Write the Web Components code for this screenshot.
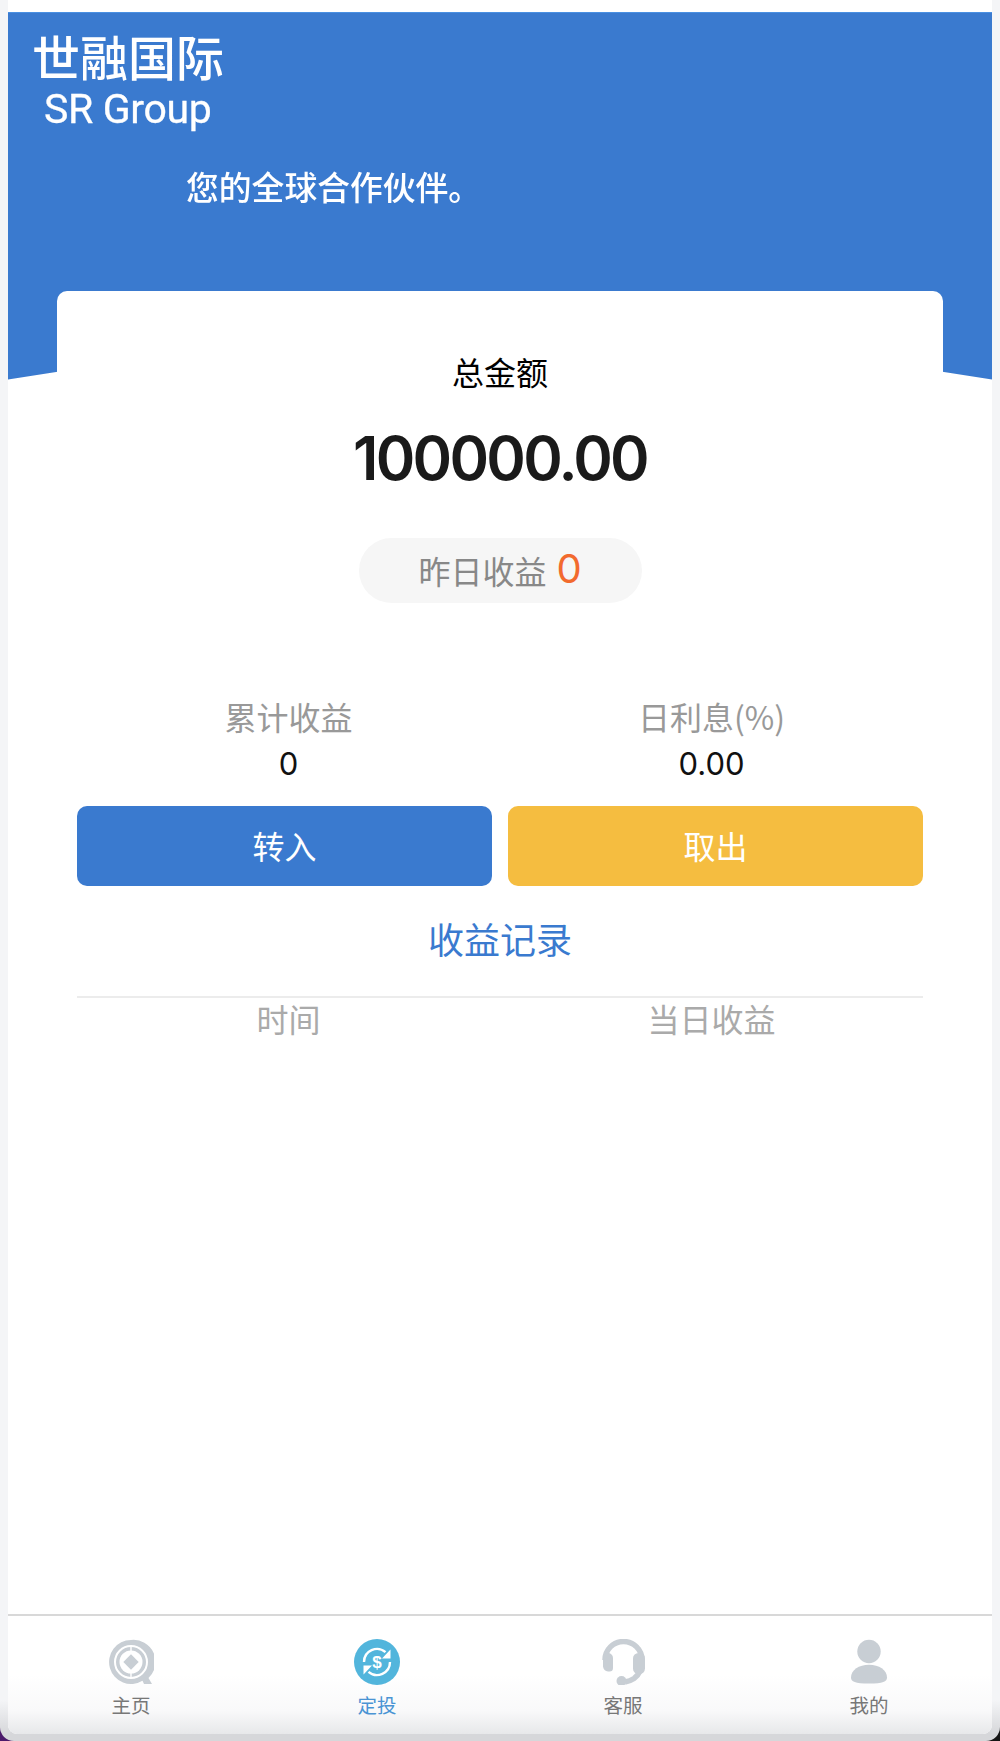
<!DOCTYPE html>
<html lang="zh"><head><meta charset="utf-8"><style>
html,body{margin:0;padding:0;height:1741px;overflow:hidden}
body{font-family:"Noto Sans CJK SC","Inter",sans-serif}
</style></head><body>
<app-window>
  <brand-hero></brand-hero>
  <balance-card></balance-card>
  <tab-bar slot="tabs">
    <tab-item label="主页"><svg viewBox="0 0 46 46" width="46" height="46"><path d="M23 1a22 22 0 1 0 11.500 40.800L36 45h8l-3.500-6A22 22 0 0 0 23 1z" fill="#c8ced4"/><circle cx="23" cy="23" r="16" fill="none" stroke="#fff" stroke-width="2"/><circle cx="23" cy="23" r="11.500" fill="#fff"/><path d="M23 7v5M23 34v5" stroke="#fff" stroke-width="1.400"/><path d="M23 15.300l7.700 7.700-7.700 7.700-7.700-7.700z" fill="#c8ced4"/></svg></tab-item>
    <tab-item label="定投" active><svg viewBox="0 0 46 46" width="46" height="46"><circle cx="23" cy="23" r="23" fill="#52b5dc"/><path d="M10 23a13 13 0 0 1 21.500-9.800" fill="none" stroke="#fff" stroke-width="2.400"/><path d="M36 23a13 13 0 0 1-21.500 9.800" fill="none" stroke="#fff" stroke-width="2.400"/><path d="M36.500 10.500v9h-8.500z" fill="#fff"/><path d="M9.500 35.500v-9h8.500z" fill="#fff"/><text x="23" y="29" text-anchor="middle" font-family="Liberation Sans" font-weight="700" font-size="17" fill="#fff">$</text></svg></tab-item>
    <tab-item label="客服"><svg viewBox="0 0 46 46" width="46" height="46"><path d="M5 21a18.500 18.500 0 0 1 37 0c0 9-3 15-8 18.500-3 2-6 3-9 3.500" fill="none" stroke="#c8ced4" stroke-width="5.500"/><path d="M3 19a5 5 0 0 1 10 0v10a3.500 3.500 0 0 1-3.500 3.500H8a6 6 0 0 1-5-5z" fill="#c8ced4"/><rect x="33" y="14" width="12" height="21" rx="5.500" fill="#c8ced4"/><circle cx="21.500" cy="42" r="5" fill="#c8ced4"/></svg></tab-item>
    <tab-item label="我的"><svg viewBox="0 0 46 46" width="46" height="46"><circle cx="23" cy="12.500" r="11.700" fill="#c8ced4"/><path d="M5 38.500C5 31 13 25.800 23 25.800S41 31 41 38.500c0 4-4 6-18 6S5 42.500 5 38.500z" fill="#c8ced4"/></svg></tab-item>
  </tab-bar>
</app-window>
<script>
function def(name, html, init){
  customElements.define(name, class extends HTMLElement{
    constructor(){super();this.attachShadow({mode:'open'}).innerHTML=html;}
    connectedCallback(){ if(init) init(this); }
  });
}
def('app-window',`<style>
:host{display:block;width:1000px;height:1741px;background:linear-gradient(90deg,#4b1a6b 50%,#141414 50%)}
.win{box-sizing:border-box;height:1741px;padding:0 8px 7px;background:linear-gradient(#f4f5f7 0,#f4f5f7 1700px,#d6d7da 1734px);border-radius:0 0 14px 14px;display:flex;flex-direction:column}
.app{flex:1;background:#fff;border-radius:0 0 9px 9px;overflow:hidden;display:flex;flex-direction:column}
.main{flex:1;padding-top:12px;min-height:0}
</style><div class="win"><div class="app"><div class="main"><slot></slot></div><slot name="tabs"></slot></div></div>`);

def('brand-hero',`<style>
:host{display:block;height:368px;color:#fff;background:#3a7acf;box-shadow:inset 0 1px #4a90e2;clip-path:path("M0 0H984V367.500Q492 285 0 367.500Z");filter:blur(.4px)}
.cn{font-size:48px;font-weight:500;line-height:48px;padding:19px 0 0 24px;width:200px;white-space:nowrap}
.en{font:41px/44px Roboto,sans-serif;padding:8px 0 0 36px;letter-spacing:-.35px;-webkit-text-stroke:.3px #fff;width:200px;white-space:nowrap}
.tag{font-size:32.800px;font-weight:500;line-height:40px;padding:35px 0 0 178px}
</style><div class="cn">世融国际</div><div class="en">SR Group</div><div class="tag">您的全球合作伙伴。</div>`);

def('balance-card',`<style>
:host{display:block;position:relative;margin:-89px 49px 0;background:#fff;border-radius:10px 10px 0 0;box-sizing:border-box;padding:0 20px;color:#000}
.title{font-size:32px;line-height:44px;padding-top:58px;text-align:center}
.amt{font:600 60px/70px Inter,sans-serif;letter-spacing:-2.700px;color:#1a1a1a;text-align:center;margin-top:30px}
.pill{width:283px;height:65px;margin:45px auto 0;border-radius:33px;background:#f6f6f6;color:#888;font-size:32px;display:flex;align-items:center;justify-content:center;gap:10px}
.pill span{position:relative;top:-1px}
.pill b{font:400 40px/1 Inter,sans-serif;color:#f26a2e;position:relative;top:-2px}
.cols{display:grid;grid-template-columns:1fr 1fr;text-align:center}
.stats{margin-top:90px;font-size:32px}
.stats .k{color:#999;line-height:46px}
.stats .v{font:31px/38px Inter,sans-serif;color:#111;margin-top:6px}
.btns{display:grid;grid-template-columns:415px 415px;justify-content:space-between;margin-top:23px}
.btn{height:80px;border-radius:10px;color:#fff;font-size:32px;display:flex;align-items:center;justify-content:center}
.btn span{position:relative;top:-1px}
.in{background:#3a7acf}.out{background:#f5bd40}
.rec{font-size:36px;line-height:50px;color:#3a7acf;text-align:center;margin-top:27px}
.th{border-top:2px solid #ececec;margin-top:33px;font-size:32px;color:#aaa;line-height:44px}
.th>div{position:relative;top:-2px}
</style>
<div class="title">总金额</div>
<div class="amt">100000.00</div>
<div class="pill"><span>昨日收益</span><b>0</b></div>
<div class="cols stats"><div><div class="k">累计收益</div><div class="v">0</div></div><div><div class="k">日利息(%)</div><div class="v">0.00</div></div></div>
<div class="btns"><div class="btn in"><span>转入</span></div><div class="btn out"><span>取出</span></div></div>
<div class="rec">收益记录</div>
<div class="cols th"><div>时间</div><div>当日收益</div></div>`);

def('tab-bar',`<style>
:host{display:grid;grid-template-columns:repeat(4,1fr);height:120px;box-sizing:border-box;border-top:2px solid #d8d8d8;background:linear-gradient(#fff 0,#fff 50%,#f9f9fa 80%,#e7e8ea 100%)}
</style><slot></slot>`);

def('tab-item',`<style>
:host{display:flex;flex-direction:column;align-items:center;padding-top:23px;box-sizing:border-box;font-size:19.500px;color:#777}
:host([active]){color:#4a94d4}
.ic{width:46px;height:46px;display:block}
.l{line-height:28px;margin-top:6px}
</style><div class="ic"><slot></slot></div><div class="l"></div>`,el=>{el.shadowRoot.querySelector('.l').textContent=el.getAttribute('label');});
</script>
</body></html>
